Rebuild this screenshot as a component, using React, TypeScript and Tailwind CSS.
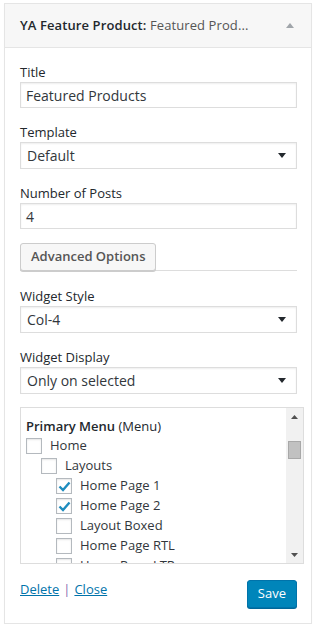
import { useState } from "react";

type Item = { label: string; depth: number; checked: boolean };

const menuItems: Item[] = [
  { label: "Home", depth: 0, checked: false },
  { label: "Layouts", depth: 1, checked: false },
  { label: "Home Page 1", depth: 2, checked: true },
  { label: "Home Page 2", depth: 2, checked: true },
  { label: "Layout Boxed", depth: 2, checked: false },
  { label: "Home Page RTL", depth: 2, checked: false },
  { label: "Home Page LTR", depth: 2, checked: false },
  { label: "Shop", depth: 0, checked: false },
];

const indent = ["pl-[5px]", "pl-[20px]", "pl-[35px]"];

function Caret() {
  return (
    <svg width="8" height="5" viewBox="0 0 8 5" className="text-[#23282d]">
      <path d="M0 0h8L4 5z" fill="currentColor" />
    </svg>
  );
}

function Field({ label, children }: { label: string; children: React.ReactNode }) {
  return (
    <div className="mb-[15px]">
      <label className="block h-[19px] leading-[19px] text-[13px] text-[#23282d]">{label}</label>
      {children}
    </div>
  );
}

function TextInput({ value }: { value: string }) {
  return (
    <div className="w-[277px] h-[26px] border border-[#ddd] bg-white shadow-[inset_0_1px_2px_rgba(0,0,0,0.07)] px-[5px] flex items-center text-[14px] text-[#32373c]">
      {value}
    </div>
  );
}

function Select({ value }: { value: string }) {
  return (
    <div className="w-[277px] h-[27px] border border-[#ddd] bg-white shadow-[inset_0_1px_2px_rgba(0,0,0,0.07)] pl-[6px] pr-[10px] flex items-center justify-between text-[14px] text-[#32373c]">
      <span>{value}</span>
      <Caret />
    </div>
  );
}

function Checkbox({ checked }: { checked: boolean }) {
  return (
    <span className="w-[16px] h-[16px] border border-[#b4b9be] bg-white shadow-[inset_0_1px_2px_rgba(0,0,0,0.1)] flex items-center justify-center shrink-0">
      {checked && (
        <svg width="13" height="11" viewBox="0 0 13 11">
          <path d="M1.5 5.5l3.5 3.5 6.5-7.5" stroke="#1e8cbe" strokeWidth="2.4" fill="none" />
        </svg>
      )}
    </span>
  );
}

export default function App() {
  const [items] = useState(menuItems);

  return (
    <div className="pt-[3px] pl-[4px] font-['Open_Sans',sans-serif]">
      <div className="w-[308px] h-[621px] border border-[#e5e5e5] bg-white shadow-[0_1px_1px_rgba(0,0,0,0.04)]">
        {/* widget header */}
        <div className="h-[44px] bg-[#f7f7f7] border-b border-[#e5e5e5] flex items-center justify-between pl-[15px] pr-[17px]">
          <h3 className="text-[13px] font-semibold text-[#23282d] whitespace-nowrap tracking-[0.1px]">
            YA Feature Product: <span className="font-normal text-[#555]">Featured Prod...</span>
          </h3>
          <svg width="8" height="5" viewBox="0 0 8 5">
            <path d="M4 0l4 5H0z" fill="#a0a5aa" />
          </svg>
        </div>

        {/* widget body */}
        <div className="pl-[15px] pt-[15px]">
          <Field label="Title">
            <TextInput value="Featured Products" />
          </Field>
          <Field label="Template">
            <Select value="Default" />
          </Field>
          <div className="mb-[14px]">
            <label className="block h-[19px] leading-[19px] text-[13px] text-[#23282d]">Number of Posts</label>
            <TextInput value="4" />
          </div>

          <div className="w-[277px] flex items-end border-b border-[#ddd] mb-[16px]">
            <button className="h-[28px] px-[10px] -mb-px bg-[#f7f7f7] border border-[#ccc] rounded-[3px] shadow-[0_1px_0_#ccc] text-[13px] font-semibold text-[#555]">
              Advanced Options
            </button>
          </div>

          <Field label="Widget Style">
            <Select value="Col-4" />
          </Field>
          <Field label="Widget Display">
            <Select value="Only on selected" />
          </Field>

          {/* menu checklist */}
          <div className="w-[284px] h-[157px] -mt-[2px] border border-[#ddd] flex overflow-hidden">
            <div className="flex-1 pt-[8px] overflow-hidden">
              <div className="h-[20px] leading-[20px] pl-[5px] text-[13px] text-[#23282d]">
                <span className="font-semibold">Primary Menu</span> (Menu)
              </div>
              {items.map((it) => (
                <div key={it.label} className={`h-[20px] flex items-center gap-[8px] text-[13px] text-[#32373c] ${indent[it.depth]}`}>
                  <Checkbox checked={it.checked} />
                  <span>{it.label}</span>
                </div>
              ))}
            </div>
            <div className="w-[17px] bg-[#f1f1f1] flex flex-col items-center">
              <div className="h-[17px] flex items-center justify-center">
                <svg width="7" height="4" viewBox="0 0 7 4">
                  <path d="M3.5 0L7 4H0z" fill="#505050" />
                </svg>
              </div>
              <div className="mt-[16px] w-[13px] h-[18px] bg-[#c1c1c1] border border-[#a8a8a8]" />
              <div className="flex-1" />
              <div className="h-[17px] flex items-center justify-center">
                <svg width="7" height="4" viewBox="0 0 7 4">
                  <path d="M0 0h7L3.5 4z" fill="#505050" />
                </svg>
              </div>
            </div>
          </div>

          {/* footer */}
          <div className="w-[277px] mt-[16px] flex items-start justify-between">
            <div className="flex items-center gap-[4px] text-[13px] leading-[18px]">
              <a href="#" className="text-[#0073aa] underline">Delete</a>
              <span className="text-[#8a6bb0]">|</span>
              <a href="#" className="text-[#0073aa] underline">Close</a>
            </div>
            <button className="h-[28px] px-[10px] bg-[#0085ba] border border-[#0073aa] rounded-[3px] shadow-[0_1px_0_#006799] text-[13px] text-white">
              Save
            </button>
          </div>
        </div>
      </div>
    </div>
  );
}
